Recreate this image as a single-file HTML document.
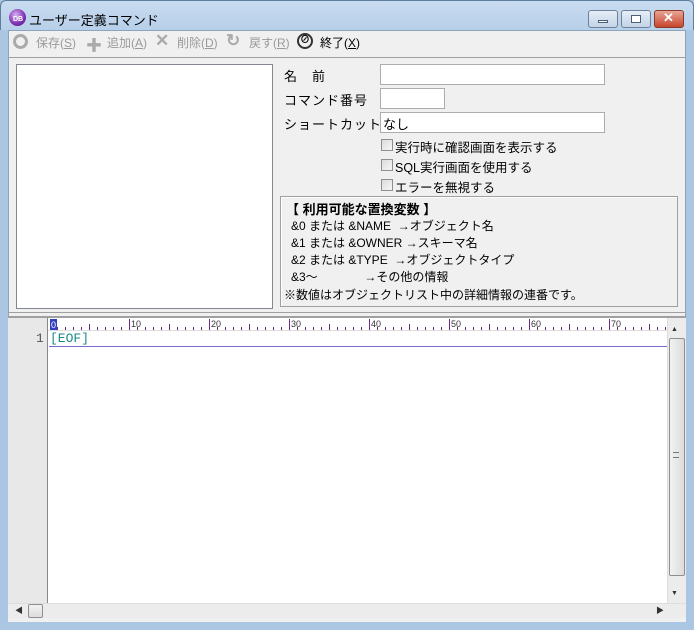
<!DOCTYPE html>
<html><head><meta charset="utf-8"><style>
*{margin:0;padding:0;box-sizing:border-box}
body{width:694px;height:630px;overflow:hidden;background:#aac6e2;font-family:"Liberation Sans","Noto Sans CJK JP",sans-serif;font-size:12px;color:#000;position:relative}
.a{position:absolute}
.title{left:0;top:0;width:694px;height:30px;background:linear-gradient(#c9dcf0,#b7cfe9);border-radius:6px 6px 0 0;border:1px solid #5f7d9d;border-bottom:none}
.client{left:8px;top:30px;width:678px;height:592px;background:#f0f0f0;border:1px solid #8ea4bb}
.tb{top:34px;font-size:12px;color:#9a9a9a}
.box{background:#fff;border:1px solid #abadb3}
.cb{width:12px;height:12px;border:1px solid #8f8f8f;background:linear-gradient(135deg,#dcdcdc,#f6f6f6)}
.btn{top:10px;height:18px;border:1px solid #6d819a;border-radius:3px;background:linear-gradient(#e6eef7,#c3d3e6)}
.lb{font-size:13px;letter-spacing:1px}
.ck{font-size:12.5px}
</style></head><body>
<div class="a title"></div>
<div class="a" style="left:9px;top:9px;width:17px;height:17px;border-radius:50%;background:radial-gradient(circle at 40% 35%,#d9b0f0,#7a2fb0 60%,#4b1670);"></div>
<div class="a" style="left:13px;top:16px;font-size:7px;color:#fff;font-weight:bold">DB</div>
<div class="a" style="left:29px;top:10px;font-size:13px">ユーザー定義コマンド</div>
<div class="a btn" style="left:588px;width:30px"><div class="a" style="left:9px;top:9px;width:10px;height:3px;background:#fff;border:1px solid #4a5e78"></div></div>
<div class="a btn" style="left:621px;width:30px"><div class="a" style="left:9px;top:4px;width:10px;height:8px;border:1px solid #4a5e78;background:#fff"></div></div>
<div class="a btn" style="left:654px;width:30px;border-color:#8a3a2a;background:linear-gradient(#e9a595,#c6452c)"><div class="a" style="left:8px;top:-1px;color:#fff;font-weight:bold;font-size:13px">✕</div></div>
<div class="a client"></div>
<div class="a" style="left:13px;top:34px;width:15px;height:15px;border-radius:50%;border:3px solid #aaa"></div>
<div class="a tb" style="left:36px">保存(<u>S</u>)</div>
<div class="a" style="left:86px;top:32px;font-size:16px;color:#aaa;font-weight:bold">✚</div>
<div class="a tb" style="left:107px">追加(<u>A</u>)</div>
<div class="a" style="left:155px;top:31px;font-size:17px;color:#aaa;font-weight:bold">✕</div>
<div class="a tb" style="left:177px">削除(<u>D</u>)</div>
<div class="a" style="left:226px;top:31px;font-size:17px;color:#aaa;font-weight:bold">↻</div>
<div class="a tb" style="left:249px">戻す(<u>R</u>)</div>
<div class="a" style="left:297px;top:33px;width:16px;height:16px;border-radius:50%;border:2px solid #333;font-size:10px;text-align:center;line-height:12px;font-weight:bold">⊘</div>
<div class="a tb" style="left:320px;color:#000">終了(<u>X</u>)</div>
<div class="a" style="left:8px;top:57px;width:678px;height:256px;border-top:1px solid #a0a0a0;border-bottom:1px solid #a0a0a0"></div>
<div class="a" style="left:16px;top:64px;width:257px;height:245px;background:#fff;border:1px solid #828790"></div>
<div class="a lb" style="left:284px;top:66px">名　前</div>
<div class="a box" style="left:380px;top:64px;width:225px;height:21px"></div>
<div class="a lb" style="left:284px;top:90px">コマンド番号</div>
<div class="a box" style="left:380px;top:88px;width:65px;height:21px"></div>
<div class="a lb" style="left:284px;top:114px">ショートカット</div>
<div class="a box" style="left:380px;top:112px;width:225px;height:21px;font-size:13px;padding:1px 2px">なし</div>
<div class="a cb" style="left:381px;top:139px"></div><div class="a ck" style="left:395px;top:137px">実行時に確認画面を表示する</div>
<div class="a cb" style="left:381px;top:159px"></div><div class="a ck" style="left:395px;top:157px">SQL実行画面を使用する</div>
<div class="a cb" style="left:381px;top:179px"></div><div class="a ck" style="left:395px;top:177px">エラーを無視する</div>
<div class="a" style="left:280px;top:196px;width:398px;height:111px;border:1px solid #a0a0a0;box-shadow:inset 1px 1px 0 #fff"></div>
<div class="a" style="left:286px;top:201px;font-size:13px;font-weight:bold;line-height:17px">【 利用可能な置換変数 】</div>
<div class="a" style="left:291px;top:218px;font-size:12px;line-height:17px;white-space:pre">&amp;0 または &amp;NAME  →オブジェクト名
&amp;1 または &amp;OWNER →スキーマ名
&amp;2 または &amp;TYPE  →オブジェクトタイプ
&amp;3～              →その他の情報</div>
<div class="a" style="left:284px;top:286px;font-size:12px">※数値はオブジェクトリスト中の詳細情報の連番です。</div>
<div class="a" style="left:8px;top:316px;width:678px;height:306px;border-top:2px solid #a0a0a0;background:#fff"></div>
<div class="a" style="left:8px;top:318px;width:40px;height:286px;background:#e8e8e8;border-right:1px solid #888"></div>
<div class="a" style="left:48px;top:318px;width:619px;height:13px;background:#fff;border-bottom:1px solid #ddd;overflow:hidden">
<svg width="619" height="13" xmlns="http://www.w3.org/2000/svg">
<g stroke="#6a2a8a" stroke-width="1">
<path d="M9.5 9v3M17.5 9v3M25.5 9v3M33.5 9v3M41.5 6v6M49.5 9v3M57.5 9v3M65.5 9v3M73.5 9v3M81.5 1v11M89.5 9v3M97.5 9v3M105.5 9v3M113.5 9v3M121.5 6v6M129.5 9v3M137.5 9v3M145.5 9v3M153.5 9v3M161.5 1v11M169.5 9v3M177.5 9v3M185.5 9v3M193.5 9v3M201.5 6v6M209.5 9v3M217.5 9v3M225.5 9v3M233.5 9v3M241.5 1v11M249.5 9v3M257.5 9v3M265.5 9v3M273.5 9v3M281.5 6v6M289.5 9v3M297.5 9v3M305.5 9v3M313.5 9v3M321.5 1v11M329.5 9v3M337.5 9v3M345.5 9v3M353.5 9v3M361.5 6v6M369.5 9v3M377.5 9v3M385.5 9v3M393.5 9v3M401.5 1v11M409.5 9v3M417.5 9v3M425.5 9v3M433.5 9v3M441.5 6v6M449.5 9v3M457.5 9v3M465.5 9v3M473.5 9v3M481.5 1v11M489.5 9v3M497.5 9v3M505.5 9v3M513.5 9v3M521.5 6v6M529.5 9v3M537.5 9v3M545.5 9v3M553.5 9v3M561.5 1v11M569.5 9v3M577.5 9v3M585.5 9v3M593.5 9v3M601.5 6v6M609.5 9v3M617.5 9v3"/>
</g>
<rect x="2" y="1" width="7" height="11" fill="#3040c0"/>
<g font-family="Liberation Sans" font-size="9" fill="#333">
<text x="3" y="10" fill="#fff">0</text><text x="83" y="9">10</text><text x="163" y="9">20</text><text x="243" y="9">30</text><text x="323" y="9">40</text><text x="403" y="9">50</text><text x="483" y="9">60</text><text x="563" y="9">70</text>
</g></svg></div>
<div class="a" style="left:36px;top:331px;font-family:'Liberation Mono',monospace;font-size:13px;color:#555">1</div>
<div class="a" style="left:50px;top:331px;font-family:'Liberation Mono',monospace;font-size:13px;color:#1a8a8a">[EOF]</div>
<div class="a" style="left:49px;top:346px;width:618px;height:1px;background:#7a6ad0"></div>
<div class="a" style="left:667px;top:318px;width:19px;height:286px;background:#ececec;border-left:1px solid #ddd"></div>
<div class="a" style="left:671px;top:326px;font-size:7px;color:#333">▲</div>
<div class="a" style="left:669px;top:338px;width:16px;height:238px;border:1px solid #8f8f8f;border-radius:2px;background:linear-gradient(90deg,#f2f2f2,#dcdcdc)"></div>
<div class="a" style="left:673px;top:452px;width:6px;height:6px;border-top:1px solid #777;border-bottom:1px solid #777"></div>
<div class="a" style="left:671px;top:590px;font-size:7px;color:#333">▼</div>
<div class="a" style="left:8px;top:603px;width:678px;height:15px;background:#ececec;border-top:1px solid #ddd"></div>
<div class="a" style="left:15px;top:605px;font-size:8px;color:#333">◀</div>
<div class="a" style="left:28px;top:604px;width:15px;height:14px;border:1px solid #8f8f8f;border-radius:2px;background:linear-gradient(#f2f2f2,#dcdcdc)"></div>
<div class="a" style="left:656px;top:605px;font-size:8px;color:#333">▶</div>
<div class="a" style="left:8px;top:618px;width:678px;height:4px;background:#f0f0f0"></div>
</body></html>
